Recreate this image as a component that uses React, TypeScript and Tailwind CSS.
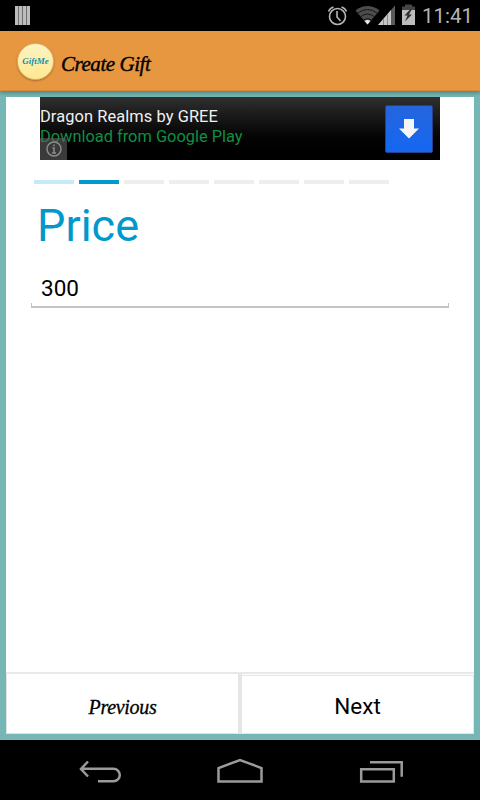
import { useState } from 'react';

const STEP_COUNT = 8;

function StatusBar() {
  return (
    <div className="h-[31px] shrink-0 bg-black flex items-center pl-[15px] pr-[9px]">
      <svg width="15" height="19" viewBox="0 0 15 19" aria-hidden="true">
        <rect width="15" height="19" fill="#6f6f6f" />
        <path d="M0 0h3v19H0zM4 0h3v19H4zM8 0h3v19H8zM12 0h3v19h-3z" fill="#bdbdbd" />
      </svg>
      <div className="ml-auto flex items-center">
        <svg width="96" height="31" viewBox="324 0 96 31" aria-hidden="true">
          <g fill="none" stroke="#b5b5b5" strokeWidth="1.6">
            <circle cx="337.5" cy="16.5" r="8" />
            <path d="M337 11v6l3.500 4M328.500 11.500q1.500-3.500 5-4.500M346.500 11.500q-1.500-3.500-5-4.500" />
          </g>
          <path d="M355.500 10.500C362 4.500 373 4.500 379.500 10.500L367.500 24.500Z" fill="#4c4c4c" />
          <path d="M358 13q9.500-7 19 0M360.800 16.500q6.700-5 13.400 0M363.500 20q4-3 8 0" fill="none" stroke="#161616" strokeWidth="1" />
          <path d="M364.500 21q3-2.200 6 0l-3 3.500z" fill="#e8e8e8" />
          <path d="M378 25L395 5.500V25z" fill="#5a5a5a" />
          <path d="M378 25L391 10V25z" fill="#c6c6c6" />
          <path d="M383.500 19v6M387.500 14.500V25" stroke="#8a8a8a" strokeWidth="1" />
          <path d="M405 4.500h7v2h3V11h-13V6.500h3z" fill="#454545" />
          <path d="M402 10h13v15h-13z" fill="#bdbdbd" />
          <path d="M410.500 9l-6 6.500h3l-2.500 6 7-7h-3l3-5.500z" fill="#303030" />
        </svg>
        <span className="ml-[2px] mt-[2px] w-[49px] text-[20.500px] leading-[29px] text-[#b5b5b5] whitespace-nowrap">11:41</span>
      </div>
    </div>
  );
}

function AppHeader() {
  return (
    <header className="relative z-10 h-[60px] shrink-0 bg-[#e6973f] border-b border-[#d48b3a] shadow-[0_2px_4px_rgba(0,0,0,0.3)] flex items-center pl-[17px]">
      <div className="size-[37px] mt-[2px] rounded-full bg-linear-to-b from-[#fbf3c2] to-[#ffe98f] border border-[#d8b26a] shadow-[0_1px_2px_rgba(0,0,0,0.3)] flex items-center justify-center">
        <span className="font-['Liberation_Serif',serif] italic font-bold text-[9px] leading-none text-[#168fae] whitespace-nowrap">GiftMe</span>
      </div>
      <h1 className="ml-[7px] mt-[6px] font-['Liberation_Serif',serif] italic text-[21px] leading-6 tracking-[-0.450px] [-webkit-text-stroke:0.400px_black] text-black">Create Gift</h1>
    </header>
  );
}

function AdBanner() {
  return (
    <div className="relative ml-[34px] w-[400px] h-[63px] bg-linear-to-b from-[#303030] to-black flex items-center">
      <div className="mb-[3px] text-[16.400px] leading-5">
        <p className="tracking-[0.090px] text-[#f1f1f1]">Dragon Realms by GREE</p>
        <p className="text-[#0f8f43]">Download from Google Play</p>
      </div>
      <button aria-label="Download" className="ml-auto mr-[7px] mt-px size-[48px] rounded-[2px] bg-linear-to-b from-[#2465dc] to-[#1367f2] border border-[#27408c] flex items-center justify-center">
        <svg width="20" height="20" viewBox="0 0 20 20" aria-hidden="true">
          <path d="M5 0h10v9.500h5L10 19.500 0 9.500h5z" fill="#f5f5f5" />
        </svg>
      </button>
      <div className="absolute left-0 bottom-0 w-[27px] h-[22px] rounded-tr-[3px] bg-[#606060]/60 flex items-center justify-center">
        <svg width="16" height="16" viewBox="0 0 16 16" fill="none" stroke="#8c8c8c" strokeWidth="1.500" aria-hidden="true">
          <circle cx="8" cy="8" r="7" />
          <path d="M6.500 7H8v5M6 12h4M8 3.500v1.700" />
        </svg>
      </div>
    </div>
  );
}

function StepStrip({ current }: { current: number }) {
  return (
    <div className="mt-5 ml-7 flex gap-[5px]">
      {Array.from({ length: STEP_COUNT }, (_, i) => (
        <div
          key={i}
          className={`w-10 h-1 ${i < current ? 'bg-[#c5eaf8]' : i === current ? 'bg-[#0099cc]' : 'bg-[#eeeeee]'}`}
        />
      ))}
    </div>
  );
}

function NavigationBar() {
  return (
    <nav className="h-[60px] shrink-0 bg-black flex items-center justify-center">
      <svg width="480" height="60" viewBox="0 740 480 60" fill="none" stroke="#9b9b9b" strokeWidth="2.500" aria-hidden="true">
        <path d="M88 761.500l-7 7.500 7 7.500M81 768.700h32.500a6.300 6.300 0 0 1 0 12.600H98" />
        <path d="M218.500 781.500V768L240 760l21.500 8v13.500z" />
        <path d="M361.200 769.200h32.600v12.300h-32.600zM370 762.300h31.700v14.500" />
      </svg>
    </nav>
  );
}

export default function App() {
  const [price, setPrice] = useState('300');

  return (
    <div className="w-[480px] h-[800px] flex flex-col overflow-hidden bg-[#76b7b5] font-[Roboto,sans-serif]">
      <StatusBar />
      <AppHeader />
      <main className="mx-[6px] mt-[6px] mb-[6px] flex-1 min-h-0 flex flex-col bg-white">
        <AdBanner />
        <StepStrip current={1} />
        <h2 className="mt-[15px] ml-[31px] text-[45px] leading-[54px] text-[#0099cc]">Price</h2>
        <div className="mt-[18px] ml-[25px] w-[418px]">
          <input
            value={price}
            onChange={(e) => setPrice(e.target.value)}
            className="block w-full h-[31px] px-[10px] pt-[4px] pb-[1px] text-[22.500px] leading-[26px] text-black outline-none"
          />
          <div className="h-[6px] flex flex-col justify-end">
            <div className="h-[5px] border-x border-b-2 border-[#c4c4c4]" />
          </div>
        </div>
        <div className="mt-auto h-[62px] border-t-2 border-[#e9e9e9] flex">
          <button className="w-[232px] border-l border-b border-[#e2e2e2] font-['Liberation_Serif',serif] italic text-[20px] tracking-[-0.300px] [-webkit-text-stroke:0.300px_black] text-black pt-[6px]">Previous</button>
          <div className="w-[4px] bg-[#e5e5e5]" />
          <div className="flex-1 pt-px">
            <button className="w-full h-full border-t border-r border-b border-[#e5e5e5] text-[22.500px] text-black pt-[5px]">Next</button>
          </div>
        </div>
      </main>
      <NavigationBar />
    </div>
  );
}
